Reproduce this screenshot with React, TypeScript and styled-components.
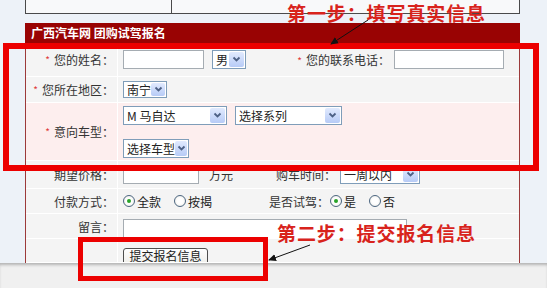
import React from "react";
import styled, { createGlobalStyle } from "styled-components";

const GlobalStyle = createGlobalStyle`
  html, body {
    margin: 0;
    padding: 0;
  }
  body {
    background: #edf2f8;
    font-family: "Noto Sans CJK SC", "Liberation Sans", sans-serif;
    font-size: 12px;
    color: #333;
  }
`;

const Page = styled.div`
  position: relative;
  width: 547px;
  height: 288px;
  overflow: hidden;
  display: flex;
  flex-direction: column;
  background: #edf2f8;
`;

const Main = styled.div`
  margin-left: 25px;
  width: 495px;
`;

const TopBox = styled.div`
  display: flex;
  height: 14px;
  box-sizing: border-box;
  border: 1px solid #4a4a4a;
  border-top: none;
  background: #f8f9fa;
`;

const TopCell = styled.div<{ $w?: number }>`
  width: ${(p) => (p.$w ? `${p.$w}px` : "auto")};
  flex: ${(p) => (p.$w ? "none" : "1")};
  border-right: ${(p) => (p.$w ? "1px solid #4a4a4a" : "none")};
`;

const Header = styled.div`
  margin-top: 9px;
  height: 20px;
  line-height: 20px;
  padding-left: 6px;
  background: #990303;
  color: #fff;
  font-weight: bold;
  font-size: 12px;
`;

const Form = styled.div`
  border-left: 1px solid #9c3a3a;
  border-right: 1px solid #9c3a3a;
  background: #f4f4f4;
`;

const Row = styled.div<{ $h: number; $pink?: boolean }>`
  display: flex;
  height: ${(p) => p.$h}px;
  box-sizing: border-box;
  border-bottom: 1px solid #fff;
  background: ${(p) => (p.$pink ? "#fdeeee" : "#f4f4f4")};
  overflow: hidden;
`;

const Label = styled.div`
  width: 92px;
  flex: none;
  box-sizing: border-box;
  padding-right: 3px;
  border-right: 1px solid #fff;
  display: flex;
  align-items: center;
  justify-content: flex-end;
  white-space: nowrap;
`;

const Star = styled.span`
  color: #e03a3a;
  font-size: 10px;
  margin-right: 4px;
`;

const Cell = styled.div<{ $col?: boolean; $top?: number }>`
  flex: 1;
  display: flex;
  flex-direction: ${(p) => (p.$col ? "column" : "row")};
  align-items: ${(p) => (p.$top !== undefined ? "flex-start" : p.$col ? "flex-start" : "center")};
  padding-left: 5px;
  padding-top: ${(p) => p.$top ?? 0}px;
  gap: ${(p) => (p.$col ? "14px" : "0")};
  justify-content: ${(p) => (p.$col ? "center" : "flex-start")};
`;

const Line = styled.div`
  display: flex;
`;

const TextInput = styled.div<{ $w: number; $h?: number }>`
  width: ${(p) => p.$w}px;
  height: ${(p) => p.$h ?? 19}px;
  flex: none;
  box-sizing: border-box;
  border: 1px solid #a5acb2;
  background: #fff;
`;

const Select = styled.span<{ $w: number; $h?: number; $ml?: number }>`
  display: inline-flex;
  align-items: center;
  justify-content: space-between;
  flex: none;
  width: ${(p) => p.$w}px;
  height: ${(p) => p.$h ?? 19}px;
  margin-left: ${(p) => p.$ml ?? 0}px;
  box-sizing: border-box;
  border: 1px solid #7f9db9;
  background: #fff;
  padding-left: 3px;
  font-size: 12px;
  color: #222;
  white-space: nowrap;
`;

const SelectBtn = styled.span`
  width: 15px;
  height: calc(100% - 2px);
  margin-right: 1px;
  border-radius: 2px;
  background: linear-gradient(#e1eafe, #b7cbf6);
  display: flex;
  align-items: center;
  justify-content: center;
`;

const SubLabel = styled.span<{ $w: number; $align?: string }>`
  width: ${(p) => p.$w}px;
  flex: none;
  text-align: ${(p) => p.$align ?? "right"};
  padding-right: 4px;
  box-sizing: border-box;
  white-space: nowrap;
`;

const Unit = styled.span`
  margin-left: 10px;
  width: 24px;
  flex: none;
`;

const RadioGroup = styled.div<{ $w?: number }>`
  display: flex;
  align-items: center;
  width: ${(p) => (p.$w ? `${p.$w}px` : "auto")};
  flex: none;
`;

const RadioItem = styled.label`
  display: inline-flex;
  align-items: center;
  margin-right: 13px;
  color: #222;
`;

const RadioDot = styled.span<{ $on?: boolean }>`
  width: 12px;
  height: 12px;
  box-sizing: border-box;
  border-radius: 50%;
  border: 1px solid #4c6680;
  background: radial-gradient(circle, #fff 40%, #e6e6e0);
  margin-right: 2px;
  display: flex;
  align-items: center;
  justify-content: center;
  &::after {
    content: "";
    width: 4px;
    height: 4px;
    border-radius: 50%;
    background: ${(p) => (p.$on ? "#29a329" : "transparent")};
  }
`;

const Button = styled.div`
  margin-top: 9px;
  height: 20px;
  width: 85px;
  box-sizing: border-box;
  border: 1px solid #4e4e4e;
  border-radius: 3px;
  background: linear-gradient(#fefefe, #ecebe6);
  text-align: center;
  line-height: 13px;
  color: #222;
  font-size: 12px;
`;

const Footer = styled.div`
  flex: 1;
  background: #f0f0f0;
  box-shadow: inset 0 3px 3px -1px rgba(0, 0, 0, 0.25);
`;

const Mark = styled.div<{ $x: number; $y: number; $w: number; $h: number; $b: number }>`
  position: absolute;
  left: ${(p) => p.$x}px;
  top: ${(p) => p.$y}px;
  width: ${(p) => p.$w}px;
  height: ${(p) => p.$h}px;
  box-sizing: border-box;
  border: ${(p) => p.$b}px solid #ec0000;
  pointer-events: none;
`;

const Note = styled.div<{ $x: number; $y: number }>`
  position: absolute;
  left: ${(p) => p.$x}px;
  top: ${(p) => p.$y}px;
  color: #d8231c;
  font-size: 19px;
  font-weight: bold;
  letter-spacing: 0.9px;
  line-height: 21px;
  white-space: nowrap;
`;

const Arrows = styled.svg`
  position: absolute;
  left: 0;
  top: 0;
  pointer-events: none;
`;

const Chevron = () => (
  <svg width="9" height="7" viewBox="0 0 9 7">
    <polyline points="1.5,1.5 4.5,4.5 7.5,1.5" fill="none" stroke="#4d6185" strokeWidth="1.8" />
  </svg>
);

const Dropdown: React.FC<{ w: number; h?: number; ml?: number; children: React.ReactNode }> = ({ w, h, ml, children }) => (
  <Select $w={w} $h={h} $ml={ml}>
    <span>{children}</span>
    <SelectBtn>
      <Chevron />
    </SelectBtn>
  </Select>
);

const Radio: React.FC<{ on?: boolean; children: React.ReactNode }> = ({ on, children }) => (
  <RadioItem>
    <RadioDot $on={on} />
    {children}
  </RadioItem>
);

export default function App() {
  return (
    <Page>
      <GlobalStyle />
      <Main>
        <TopBox>
          <TopCell $w={145} />
          <TopCell />
        </TopBox>
        <Header>广西汽车网 团购试驾报名</Header>
        <Form>
          <Row $h={34}>
            <Label>
              <Star>*</Star>您的姓名：
            </Label>
            <Cell>
              <TextInput $w={81} />
              <Dropdown w={34} ml={8}>男</Dropdown>
              <SubLabel $w={148}>
                <Star>*</Star>您的联系电话：
              </SubLabel>
              <TextInput $w={110} />
            </Cell>
          </Row>
          <Row $h={26}>
            <Label>
              <Star>*</Star>您所在地区：
            </Label>
            <Cell>
              <Dropdown w={44} h={17}>南宁</Dropdown>
            </Cell>
          </Row>
          <Row $h={58} $pink>
            <Label>
              <Star>*</Star>意向车型：
            </Label>
            <Cell $col>
              <Line>
                <Dropdown w={104}>M 马自达</Dropdown>
                <Dropdown w={107} ml={8}>选择系列</Dropdown>
              </Line>
              <Dropdown w={66}>选择车型</Dropdown>
            </Cell>
          </Row>
          <Row $h={28}>
            <Label>期望价格：</Label>
            <Cell>
              <TextInput $w={76} $h={18} />
              <Unit>万元</Unit>
              <SubLabel $w={107}>购车时间：</SubLabel>
              <Dropdown w={80} h={18}>一周以内</Dropdown>
            </Cell>
          </Row>
          <Row $h={25}>
            <Label>付款方式：</Label>
            <Cell>
              <RadioGroup $w={146}>
                <Radio on>全款</Radio>
                <Radio>按揭</Radio>
              </RadioGroup>
              <SubLabel $w={61} $align="left">是否试驾：</SubLabel>
              <RadioGroup>
                <Radio on>是</Radio>
                <Radio>否</Radio>
              </RadioGroup>
            </Cell>
          </Row>
          <Row $h={25}>
            <Label>留言：</Label>
            <Cell $top={5}>
              <TextInput $w={284} $h={24} />
            </Cell>
          </Row>
          <Row $h={24}>
            <Label />
            <Cell $top={0}>
              <Button>提交报名信息</Button>
            </Cell>
          </Row>
        </Form>
      </Main>
      <Footer />

      <Mark $x={3} $y={43} $w={536} $h={128} $b={6} />
      <Mark $x={78} $y={237} $w={190} $h={44} $b={5} />
      <Note $x={287} $y={2}>第一步：填写真实信息</Note>
      <Note $x={277} $y={222}>第二步：提交报名信息</Note>
      <Arrows width="547" height="288" viewBox="0 0 547 288">
        <defs>
          <marker id="head" markerWidth="8" markerHeight="8" refX="7" refY="4" orient="auto" markerUnits="userSpaceOnUse">
            <polygon points="0,0.5 8,4 0,7.5" fill="#111" />
          </marker>
        </defs>
        <line x1="368" y1="20" x2="331" y2="44" stroke="#111" strokeWidth="1" markerEnd="url(#head)" />
        <line x1="310" y1="245" x2="269" y2="260" stroke="#111" strokeWidth="1" markerEnd="url(#head)" />
      </Arrows>
    </Page>
  );
}
